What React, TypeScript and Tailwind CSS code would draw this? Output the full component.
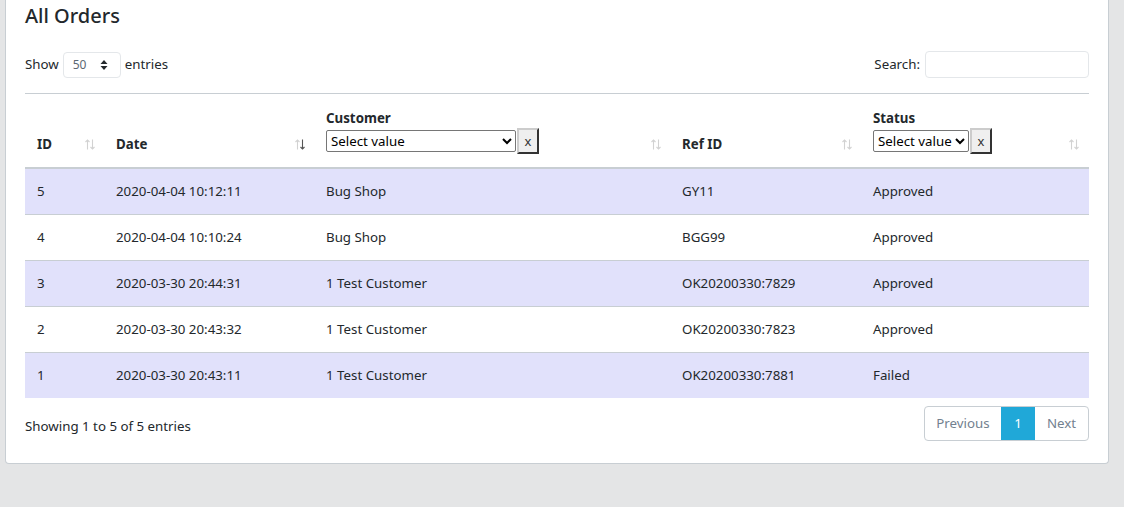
import React from "react";

const rows = [
  { id: "5", date: "2020-04-04 10:12:11", customer: "Bug Shop", ref: "GY11", status: "Approved" },
  { id: "4", date: "2020-04-04 10:10:24", customer: "Bug Shop", ref: "BGG99", status: "Approved" },
  { id: "3", date: "2020-03-30 20:44:31", customer: "1 Test Customer", ref: "OK20200330:7829", status: "Approved" },
  { id: "2", date: "2020-03-30 20:43:32", customer: "1 Test Customer", ref: "OK20200330:7823", status: "Approved" },
  { id: "1", date: "2020-03-30 20:43:11", customer: "1 Test Customer", ref: "OK20200330:7881", status: "Failed" },
];

function Sort({ active }: { active?: boolean }) {
  const light = "#d2d2d2";
  return (
    <svg
      className="absolute right-[10px] bottom-[17px]"
      width="10"
      height="11"
      viewBox="0 0 10 11"
      fill="none"
      strokeWidth="1.1"
    >
      <path d="M2.5 10.5 V1 M0.5 3 L2.5 1 L4.5 3" stroke={light} />
      <path d="M7.5 0.5 V10 M5.5 8 L7.5 10 L9.5 8" stroke={active ? "#555" : light} />
    </svg>
  );
}

function FilterSelect({ width }: { width: string }) {
  return (
    <div className="flex items-center">
      <select
        className={`${width} h-[22px] border border-[#767676] rounded-[2px] bg-white text-[13.3px] text-black pl-0 font-normal`}
        style={{ appearance: "auto" }}
        defaultValue=""
      >
        <option value="">Select value</option>
      </select>
      <button className="ml-[1px] w-[22px] h-[26px] bg-[#efefef] border-2 border-t-[#ccc] border-l-[#ccc] border-r-[#333] border-b-[#333] text-[13px] text-[#333] leading-none font-normal">
        x
      </button>
    </div>
  );
}

export default function App() {
  return (
    <div
      className="min-h-[507px] bg-[#e4e5e6] pl-[5px] pr-[15px] pb-[43px]"
      style={{ fontFamily: '"Noto Sans", "Open Sans", sans-serif' }}
    >
      <div className="bg-white border border-t-0 border-[#c8ced3] rounded-b-[4px] px-[19px] pt-[2px] pb-[22px] text-[#23282c]">
        <h2 className="text-[20px] font-medium leading-[28px] mb-[21px]">All Orders</h2>

        <div className="flex items-center justify-between h-[27px] text-[13.3px]">
          <div className="flex items-center gap-[4px]">
            <span>Show</span>
            <div className="flex items-center justify-between w-[58px] h-[26px] border border-[#e4e7ea] rounded-[4px] pl-[9px] pr-[12px]">
              <span className="text-[12px] text-[#5c6873]">50</span>
              <svg width="8" height="12" viewBox="0 0 8 12">
                <path d="M4 1 L7.5 5 L0.5 5 Z" fill="#23282c" />
                <path d="M4 11 L7.5 7 L0.5 7 Z" fill="#23282c" />
              </svg>
            </div>
            <span>entries</span>
          </div>
          <div className="flex items-center gap-[5px]">
            <span>Search:</span>
            <input className="w-[164px] h-[27px] border border-[#e4e7ea] rounded-[4px]" />
          </div>
        </div>

        <div className="border-t border-[#c8ced3] mt-[15px]" />

        <table className="w-full border-collapse text-[13.3px]">
          <colgroup>
            <col className="w-[80px]" />
            <col className="w-[210px]" />
            <col className="w-[356px]" />
            <col className="w-[191px]" />
            <col />
          </colgroup>
          <thead>
            <tr className="border-b-2 border-[#c8ced3] h-[74px]">
              <th className="relative text-left align-bottom pl-[12px] pb-[13px] font-bold leading-[20px]">
                ID
                <Sort />
              </th>
              <th className="relative text-left align-bottom pl-[11px] pb-[13px] font-bold leading-[20px]">
                Date
                <Sort active />
              </th>
              <th className="relative text-left align-bottom pl-[11px] pb-[13px] font-bold leading-[20px]">
                <div className="mb-[0px]">Customer</div>
                <FilterSelect width="w-[190px]" />
                <Sort />
              </th>
              <th className="relative text-left align-bottom pl-[11px] pb-[13px] font-bold leading-[20px]">
                Ref ID
                <Sort />
              </th>
              <th className="relative text-left align-bottom pl-[11px] pb-[13px] font-bold leading-[20px]">
                <div className="mb-[0px]">Status</div>
                <FilterSelect width="w-[96px]" />
                <Sort />
              </th>
            </tr>
          </thead>
          <tbody>
            {rows.map((r, i) => (
              <tr
                key={r.id}
                className={`h-[46px] ${i % 2 === 0 ? "bg-[#e1e1fb]" : "bg-white"} ${i > 0 ? "border-t border-[#c8ced3]" : ""}`}
              >
                <td className="pl-[12px] pt-[2px]">{r.id}</td>
                <td className="pl-[11px] pt-[2px]">{r.date}</td>
                <td className="pl-[11px] pt-[2px]">{r.customer}</td>
                <td className="pl-[11px] pt-[2px]">{r.ref}</td>
                <td className="pl-[11px] pt-[2px]">{r.status}</td>
              </tr>
            ))}
          </tbody>
        </table>

        <div className="flex items-center justify-between mt-[8px] text-[13.3px]">
          <div className="mt-[7px]">Showing 1 to 5 of 5 entries</div>
          <div className="flex h-[35px] border border-[#c8ced3] rounded-[4px] overflow-hidden text-[#73818f]">
            <div className="w-[76px] flex items-center justify-center">Previous</div>
            <div className="w-[34px] flex items-center justify-center bg-[#20a8d8] text-white">1</div>
            <div className="w-[53px] flex items-center justify-center">Next</div>
          </div>
        </div>
      </div>
    </div>
  );
}
